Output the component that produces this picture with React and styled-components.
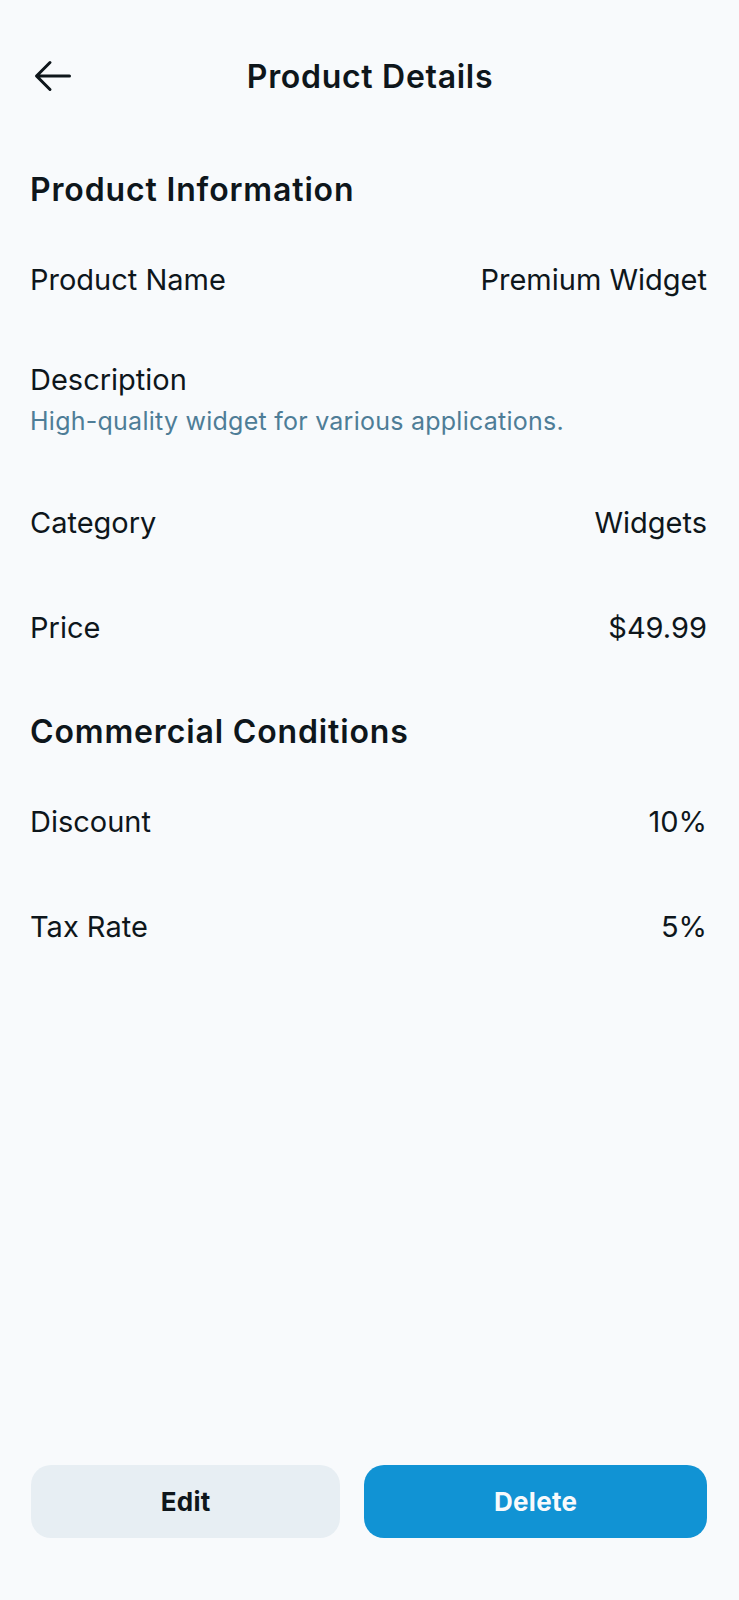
import React from "react";
import styled, { createGlobalStyle } from "styled-components";
import { PiArrowLeft } from "react-icons/pi";

const GlobalStyle = createGlobalStyle`
  body {
    margin: 0;
    background: #f8fafc;
    font-family: Inter, "Noto Sans", sans-serif;
    color: #0e161b;
  }
`;

const Page = styled.div`
  min-height: 100vh;
  display: flex;
  flex-direction: column;
  background: #f8fafc;
`;

const Header = styled.header`
  display: flex;
  align-items: center;
  height: 88px;
  padding: 32px 28px 0 29px;
`;

const BackButton = styled.button`
  width: 48px;
  height: 48px;
  padding: 0;
  border: none;
  background: none;
  color: #0e161b;
  display: flex;
  cursor: pointer;
`;

const Title = styled.h1`
  flex: 1;
  margin: 0;
  padding-right: 48px;
  text-align: center;
  font-size: 32px;
  font-weight: 600;
  letter-spacing: 0.7px;
`;

const Main = styled.main`
  flex: 1;
  padding: 18px 32px 0 30px;
`;

const SectionTitle = styled.h2`
  margin: 0;
  padding: 32px 0 17px;
  font-size: 32px;
  line-height: 40px;
  font-weight: 600;
  letter-spacing: 0.85px;
`;

const Row = styled.div`
  display: flex;
  justify-content: space-between;
  align-items: center;
  min-height: 105px;
  font-size: 29px;
`;

const Block = styled.div`
  padding: 30px 0 28px;
  font-size: 29px;
`;

const Label = styled.div`
  line-height: 36px;
`;

const Note = styled.p`
  margin: 2px 0 0;
  line-height: 42px;
  font-size: 25px;
  letter-spacing: 0.25px;
  color: #4e7d97;
`;

const Footer = styled.footer`
  display: flex;
  gap: 24px;
  padding: 0 32px 62px 31px;
`;

const ActionButton = styled.button`
  flex: 1 1 auto;
  height: 73px;
  border: none;
  border-radius: 20px;
  font-family: inherit;
  font-size: 26px;
  font-weight: 700;
  letter-spacing: 0.3px;
  background: ${({ $primary }) => ($primary ? "#1193d4" : "#e7eef3")};
  color: ${({ $primary }) => ($primary ? "#f8fafc" : "#0e161b")};
  cursor: pointer;
`;

const info = [
  { label: "Product Name", value: "Premium Widget" },
  { label: "Description", note: "High-quality widget for various applications." },
  { label: "Category", value: "Widgets" },
  { label: "Price", value: "$49.99" },
];

const conditions = [
  { label: "Discount", value: "10%" },
  { label: "Tax Rate", value: "5%" },
];

const renderItem = (item) =>
  item.note ? (
    <Block key={item.label}>
      <Label>{item.label}</Label>
      <Note>{item.note}</Note>
    </Block>
  ) : (
    <Row key={item.label}>
      <span>{item.label}</span>
      <span>{item.value}</span>
    </Row>
  );

export default function App() {
  return (
    <>
      <GlobalStyle />
      <Page>
        <Header>
          <BackButton aria-label="Back">
            <PiArrowLeft size={48} />
          </BackButton>
          <Title>Product Details</Title>
        </Header>
        <Main>
          <SectionTitle>Product Information</SectionTitle>
          {info.map(renderItem)}
          <SectionTitle>Commercial Conditions</SectionTitle>
          {conditions.map(renderItem)}
        </Main>
        <Footer>
          <ActionButton>Edit</ActionButton>
          <ActionButton $primary>Delete</ActionButton>
        </Footer>
      </Page>
    </>
  );
}
